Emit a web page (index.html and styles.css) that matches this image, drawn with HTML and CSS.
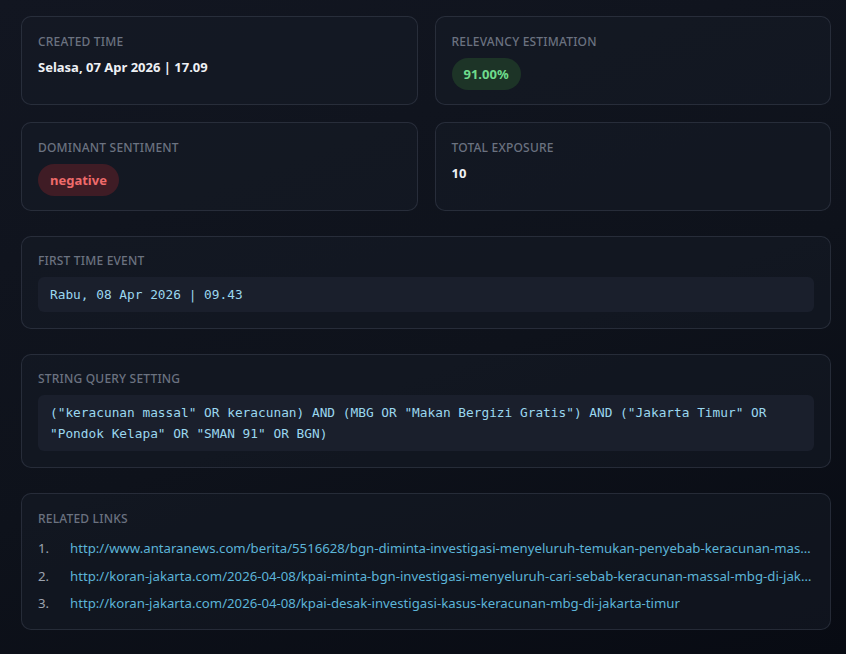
FILE: index.html
```html
<!DOCTYPE html>
<html lang="id">
<head>
    <meta charset="UTF-8">
    <meta name="viewport" content="width=device-width, initial-scale=1.0">
    <title>Issue Detail</title>
    <link rel="stylesheet" href="styles.css">
</head>
<body>
    <div class="detail">
        <div class="grid">
            <div class="card">
                <div class="label">Created Time</div>
                <div class="value">Selasa, 07 Apr 2026 | 17.09</div>
            </div>
            <div class="card">
                <div class="label">Relevancy Estimation</div>
                <span class="pill pill-green">91.00%</span>
            </div>
            <div class="card">
                <div class="label">Dominant Sentiment</div>
                <span class="pill pill-red">negative</span>
            </div>
            <div class="card">
                <div class="label">Total Exposure</div>
                <div class="value">10</div>
            </div>
        </div>

        <div class="card">
            <div class="label">First Time Event</div>
            <div class="code">Rabu, 08 Apr 2026 | 09.43</div>
        </div>

        <div class="card">
            <div class="label">String Query Setting</div>
            <div class="code">("keracunan massal" OR keracunan) AND (MBG OR "Makan Bergizi Gratis") AND ("Jakarta Timur" OR "Pondok Kelapa" OR "SMAN 91" OR BGN)</div>
        </div>

        <div class="card card-links">
            <div class="label">Related Links</div>
            <ol class="links">
                <li><span class="num">1.</span><a href="#">http://www.antaranews.com/berita/5516628/bgn-diminta-investigasi-menyeluruh-temukan-penyebab-keracunan-massal-mbg</a></li>
                <li><span class="num">2.</span><a href="#">http://koran-jakarta.com/2026-04-08/kpai-minta-bgn-investigasi-menyeluruh-cari-sebab-keracunan-massal-mbg-di-jakarta-timur</a></li>
                <li><span class="num">3.</span><a href="#">http://koran-jakarta.com/2026-04-08/kpai-desak-investigasi-kasus-keracunan-mbg-di-jakarta-timur</a></li>
            </ol>
        </div>
    </div>
</body>
</html>
```

FILE: styles.css
```css
* {
    box-sizing: border-box;
}
body {
    margin: 0;
    min-height: 654px;
    font-family: "Noto Sans", "Open Sans", sans-serif;
    background: linear-gradient(160deg, #121621 0%, #0e121b 55%, #080b13 100%);
    color: #e5e7eb;
}
.detail {
    padding: 16px 15px 20px 21px;
    display: flex;
    flex-direction: column;
    gap: 25px;
}
.grid {
    display: grid;
    grid-template-columns: 1fr 1fr;
    gap: 17px;
}
.card {
    background: rgba(22, 27, 38, 0.55);
    border: 1px solid rgba(148, 163, 184, 0.16);
    border-radius: 10px;
    padding: 16px 16px 16px 16px;
}
.grid .card {
    height: 89px;
    padding-top: 17px;
}
.label {
    font-size: 12px;
    font-weight: 500;
    line-height: 16px;
    text-transform: uppercase;
    letter-spacing: 0.2px;
    color: #6b7280;
    margin-bottom: 8px;
}
.value {
    font-size: 13px;
    font-weight: 700;
    color: #eef0f4;
}
.pill {
    display: inline-block;
    padding: 7px 12px;
    border-radius: 16px;
    font-size: 13px;
    font-weight: 700;
    line-height: 18px;
}
.pill-green {
    background: #1d3427;
    color: #6fdc8c;
}
.pill-red {
    background: #3f1c25;
    color: #ef6b6b;
}
.code {
    background: #1a1f2c;
    border-radius: 6px;
    padding: 7px 12px;
    font-family: "DejaVu Sans Mono", "Liberation Mono", monospace;
    font-size: 12.8px;
    line-height: 21px;
    color: #9ad7ef;
}
.card-links {
    padding-top: 17px;
    padding-bottom: 11px;
}
.links {
    list-style: none;
    margin: 0;
    padding: 0;
}
.links li {
    display: flex;
    font-size: 13.2px;
    line-height: 27.5px;
}
.links .num {
    width: 32px;
    flex: none;
    color: #9ca3af;
}
.links a {
    color: #5cb4d8;
    text-decoration: none;
    white-space: nowrap;
    overflow: hidden;
    text-overflow: ellipsis;
    min-width: 0;
}
```
